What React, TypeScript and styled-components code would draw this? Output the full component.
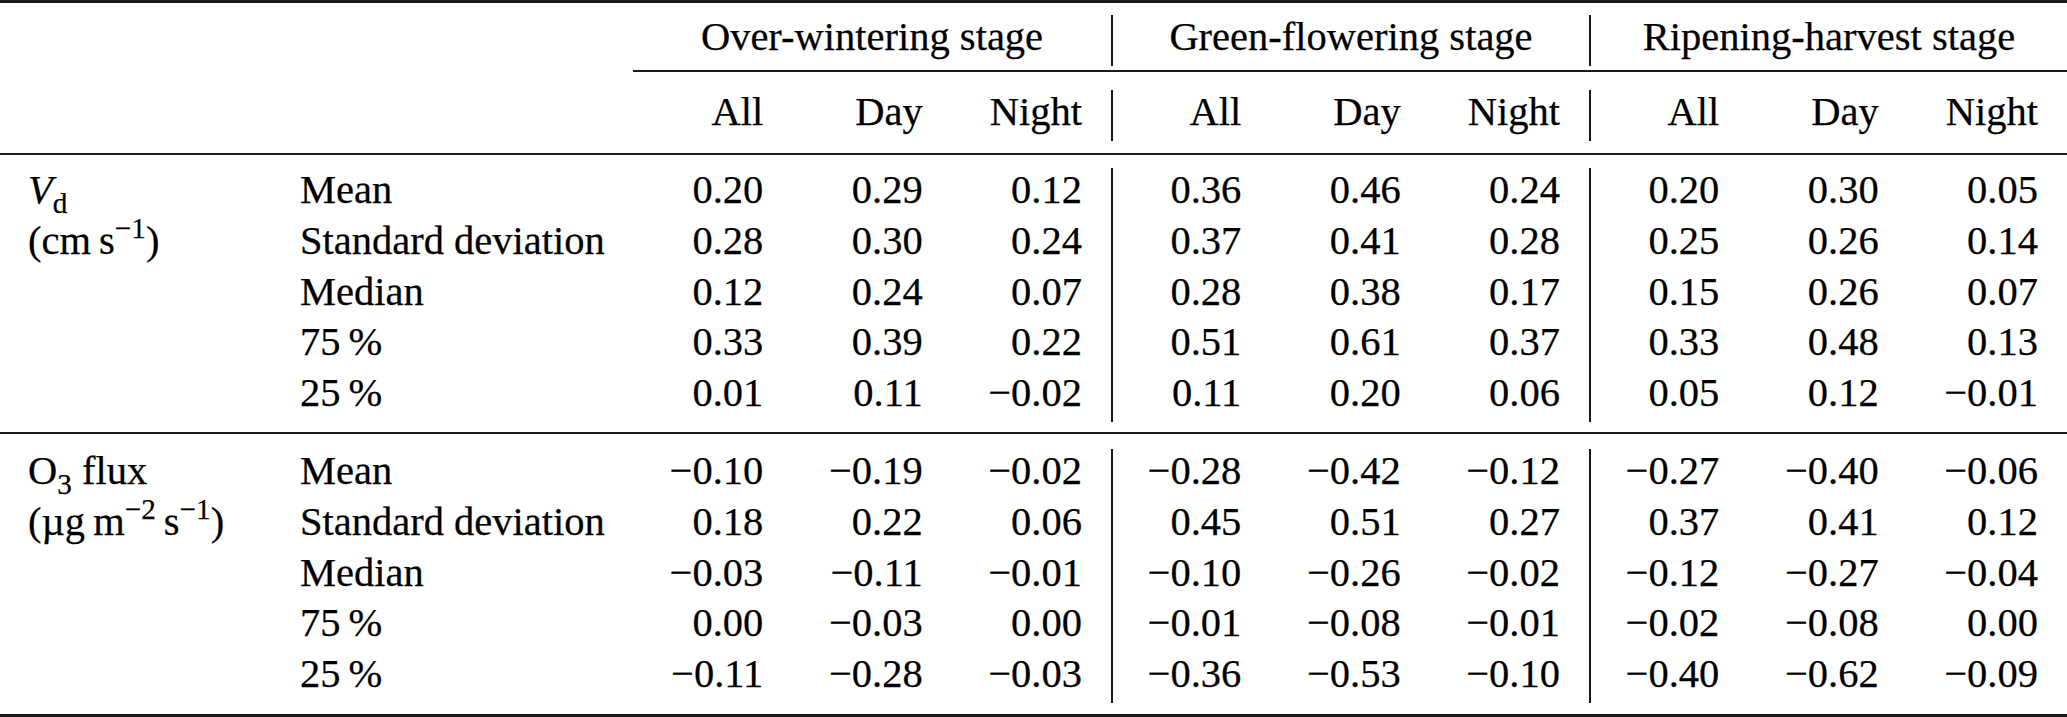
import React from "react";
import styled, { createGlobalStyle } from "styled-components";

const GlobalStyle = createGlobalStyle`
  html, body {
    margin: 0;
    padding: 0;
    background: #fff;
    overflow: hidden;
  }
  body {
    font-family: "Liberation Serif", "Times New Roman", serif;
    color: #000;
  }
`;

const COLS = "300px 333px repeat(9, minmax(0, 1fr))";
const ROW_H = "50.8px";
const INK = "#1a1a1a";

const Table = styled.div`
  width: 2067px;
  border-top: 3px solid ${INK};
  border-bottom: 3px solid ${INK};
  font-size: 40.5px;
  -webkit-text-stroke: 0.25px #000;
`;

const Head = styled.div`
  display: grid;
  grid-template-columns: ${COLS};
  grid-template-rows: ${ROW_H} auto ${ROW_H};
  padding: 12px 0 12.4px;
`;

const Section = styled.div<{ $top: number; $bottom: number }>`
  display: grid;
  grid-template-columns: ${COLS};
  grid-auto-rows: ${ROW_H};
  padding: ${(p) => p.$top}px 0 ${(p) => p.$bottom}px;
`;

const Cell = styled.div<{ $divider?: boolean; $num?: boolean }>`
  line-height: 44px;
  white-space: nowrap;
  text-align: ${(p) => (p.$num ? "right" : "left")};
  padding-right: ${(p) => (p.$num ? "29px" : "0")};
  border-left: ${(p) => (p.$divider ? `2px solid ${INK}` : "none")};
`;

const GroupLabel = styled(Cell)`
  grid-column: 1;
  padding-left: 28px;
`;

const StatLabel = styled(Cell)`
  grid-column: 2;
`;

const Blank = styled.div`
  grid-column: 1 / 3;
`;

const StageCell = styled(Cell)`
  grid-column: span 3;
  text-align: center;
`;

const CMidRule = styled.div`
  grid-column: 3 / -1;
  height: 2px;
  margin: 4.5px 0 17.5px;
  background: ${INK};
`;

const MidRule = styled.div`
  height: 2px;
  background: ${INK};
`;

const Ital = styled.span`
  font-style: italic;
`;

const Sub = styled.span`
  font-size: 0.72em;
  line-height: 0;
  vertical-align: -0.34em;
`;

const Sup = styled.span`
  font-size: 0.72em;
  line-height: 0;
  vertical-align: 0.55em;
`;

const THIN = "\u2009";
const stats = ["Mean", "Standard deviation", "Median", `75${THIN}%`, `25${THIN}%`];
const stages = ["Over-wintering stage", "Green-flowering stage", "Ripening-harvest stage"];
const periods = ["All", "Day", "Night"];

const sections = [
  {
    label: [
      <>
        <Ital>V</Ital>
        <Sub>d</Sub>
      </>,
      <>
        (cm{THIN}s<Sup>−1</Sup>)
      </>,
    ],
    top: 13,
    bottom: 10,
    rows: [
      "0.20 0.29 0.12 0.36 0.46 0.24 0.20 0.30 0.05",
      "0.28 0.30 0.24 0.37 0.41 0.28 0.25 0.26 0.14",
      "0.12 0.24 0.07 0.28 0.38 0.17 0.15 0.26 0.07",
      "0.33 0.39 0.22 0.51 0.61 0.37 0.33 0.48 0.13",
      "0.01 0.11 -0.02 0.11 0.20 0.06 0.05 0.12 -0.01",
    ],
  },
  {
    label: [
      <>
        O<Sub>3</Sub> flux
      </>,
      <>
        (µg{THIN}m<Sup>−2</Sup>
        {THIN}s<Sup>−1</Sup>)
      </>,
    ],
    top: 15,
    bottom: 11,
    rows: [
      "-0.10 -0.19 -0.02 -0.28 -0.42 -0.12 -0.27 -0.40 -0.06",
      "0.18 0.22 0.06 0.45 0.51 0.27 0.37 0.41 0.12",
      "-0.03 -0.11 -0.01 -0.10 -0.26 -0.02 -0.12 -0.27 -0.04",
      "0.00 -0.03 0.00 -0.01 -0.08 -0.01 -0.02 -0.08 0.00",
      "-0.11 -0.28 -0.03 -0.36 -0.53 -0.10 -0.40 -0.62 -0.09",
    ],
  },
];

const isDivider = (i: number) => i === 3 || i === 6;

const App: React.FC = () => {
  return (
    <>
      <GlobalStyle />
      <Table>
        <Head>
          <Blank />
          {stages.map((s, i) => (
            <StageCell key={s} $divider={i > 0}>
              {s}
            </StageCell>
          ))}
          <CMidRule />
          <Blank />
          {stages.flatMap((s, g) =>
            periods.map((p, i) => (
              <Cell key={s + p} $num $divider={g > 0 && i === 0}>
                {p}
              </Cell>
            ))
          )}
        </Head>
        {sections.map((sec, si) => (
          <React.Fragment key={si}>
            <MidRule />
            <Section $top={sec.top} $bottom={sec.bottom}>
              {sec.rows.map((row, r) => (
                <React.Fragment key={r}>
                  <GroupLabel>{sec.label[r] ?? null}</GroupLabel>
                  <StatLabel>{stats[r]}</StatLabel>
                  {row.split(" ").map((v, i) => (
                    <Cell key={i} $num $divider={isDivider(i)}>
                      {v.replace("-", "−")}
                    </Cell>
                  ))}
                </React.Fragment>
              ))}
            </Section>
          </React.Fragment>
        ))}
      </Table>
    </>
  );
};

export default App;
